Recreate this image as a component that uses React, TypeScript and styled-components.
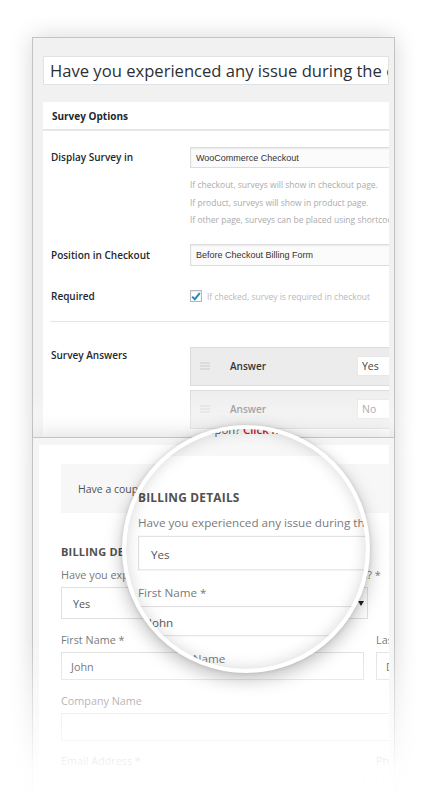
import React from "react";
import styled, { createGlobalStyle } from "styled-components";

const GlobalStyle = createGlobalStyle`
  html, body { margin: 0; padding: 0; background: #fff; }
  body { font-family: "Open Sans", "Liberation Sans", sans-serif; -webkit-font-smoothing: antialiased; }
  * { box-sizing: border-box; }
`;

const Page = styled.div`
  position: relative;
  width: 422px;
  height: 805px;
  overflow: hidden;
  background: #fff;
`;

const Stage = styled.div`
  display: flex;
  flex-direction: column;
  padding: 37px 0 0 32px;
`;

/* ---------- admin (top) panel ---------- */

const AdminPanel = styled.section`
  position: relative;
  width: 363px;
  height: 400px;
  border: 1px solid #c4c4c4;
  border-bottom: none;
  background: #f1f1f1;
  padding: 18px 5px 0 10px;
  overflow: hidden;
  box-shadow: 0 0 22px rgba(0, 0, 0, 0.16);
  &::after {
    content: "";
    position: absolute;
    left: 0;
    right: 0;
    bottom: 0;
    height: 45px;
    background: linear-gradient(rgba(255, 255, 255, 0), rgba(255, 255, 255, 0.5));
    pointer-events: none;
  }
`;

const TitleField = styled.div`
  height: 29px;
  border: 1px solid #e2e2e2;
  background: #fff;
  display: flex;
  align-items: center;
  padding: 0 6px;
  font-size: 16.6px;
  color: #2c3035;
  white-space: nowrap;
  overflow: hidden;
`;

const OptionsCard = styled.div`
  margin-top: 17px;
  background: #fff;
  overflow: hidden;
  height: 400px;
`;

const CardHeader = styled.div`
  height: 29px;
  display: flex;
  align-items: center;
  padding-left: 9px;
  font-size: 10px;
  font-weight: 700;
  color: #23282d;
  border-bottom: 2px solid #e6e6e6;
`;

const CardBody = styled.div`
  padding: 16px 0 0 8px;
  display: flex;
  flex-direction: column;
`;

const FieldRow = styled.div<{ $gap: number }>`
  display: grid;
  grid-template-columns: 139px 1fr;
  margin-top: ${(p) => p.$gap}px;
`;

const RowLabel = styled.div<{ $lh: number }>`
  font-size: 10px;
  font-weight: 600;
  color: #23282d;
  line-height: ${(p) => p.$lh}px;
  white-space: nowrap;
`;

const FieldCol = styled.div`
  display: flex;
  flex-direction: column;
  min-width: 0;
`;

const TextBox = styled.div<{ $h: number }>`
  width: 240px;
  height: ${(p) => p.$h}px;
  border: 1px solid #dcdcdc;
  background: #fbfbfb;
  box-shadow: inset 0 1px 2px rgba(0, 0, 0, 0.07);
  display: flex;
  align-items: center;
  padding-left: 5px;
  font-family: "Liberation Sans", Arial, sans-serif;
  font-size: 9px;
  color: #333;
  white-space: nowrap;
`;

const Hints = styled.div`
  margin-top: 8px;
  font-size: 8.5px;
  line-height: 17.5px;
  color: #ababab;
  white-space: nowrap;
`;

const CheckLine = styled.div`
  display: flex;
  align-items: center;
  height: 13px;
`;

const CheckBox = styled.span`
  width: 12px;
  height: 12px;
  border: 1px solid #b4b9be;
  background: #fff;
  box-shadow: inset 0 1px 2px rgba(0, 0, 0, 0.1);
  display: flex;
  align-items: center;
  justify-content: center;
`;

const CheckText = styled.span`
  margin-left: 5px;
  font-size: 8.5px;
  color: #b9b9b9;
  white-space: nowrap;
`;

const Divider = styled.div`
  margin-top: 18px;
  margin-left: -1px;
  height: 1px;
  background: #e5e5e5;
`;

const AnswerList = styled.div`
  display: flex;
  flex-direction: column;
  gap: 4px;
`;

const AnswerRow = styled.div<{ $faded?: boolean }>`
  width: 260px;
  height: 39px;
  border: 1px solid #dcdcdc;
  background: ${(p) => (p.$faded ? "#efefef" : "#ececec")};
  display: flex;
  align-items: center;
  padding-left: 9px;
`;

const AnswerLabel = styled.span<{ $faded?: boolean }>`
  margin-left: 20px;
  width: 127px;
  font-size: 10px;
  font-weight: 600;
  color: ${(p) => (p.$faded ? "#8d8d8d" : "#333")};
`;

const AnswerInput = styled.span<{ $faded?: boolean }>`
  width: 70px;
  height: 20px;
  background: #fff;
  border: 1px solid #e8e8e8;
  display: flex;
  align-items: center;
  padding-left: 4px;
  font-size: 10.5px;
  color: ${(p) => (p.$faded ? "#999" : "#444")};
`;

const Handle = ({ faded }: { faded?: boolean }) => (
  <svg width="10" height="8" viewBox="0 0 10 8">
    {[0.5, 3.5, 6.5].map((y) => (
      <rect key={y} x="0" y={y} width="10" height="1" fill={faded ? "#d6d6d6" : "#cacaca"} />
    ))}
  </svg>
);

/* ---------- checkout (bottom) panel ---------- */

const CheckoutPanel = styled.section`
  position: relative;
  z-index: 1;
  width: 363px;
  height: 380px;
  border: 1px solid #c4c4c4;
  border-bottom: none;
  background: #f5f5f5;
  padding: 7px 5px 0 6px;
  box-shadow: 0 0 22px rgba(0, 0, 0, 0.16);
`;

const CheckoutInner = styled.div`
  height: 100%;
  background: #fff;
  padding: 19px 0 0 22px;
  overflow: hidden;
`;

const Form = styled.div`
  width: 618px;
  display: flex;
  flex-direction: column;
  font-family: "Open Sans", "Liberation Sans", sans-serif;
`;

const CouponBox = styled.div`
  height: 49px;
  background: #f7f7f7;
  display: flex;
  align-items: center;
  padding-left: 17px;
  font-size: 10.5px;
  color: #515151;
  white-space: nowrap;
`;

const CouponLink = styled.span`
  color: #c4161c;
  font-weight: 600;
`;

const BillingTitle = styled.div`
  margin-top: 32px;
  font-size: 11px;
  line-height: 14px;
  font-weight: 700;
  color: #515151;
  letter-spacing: 0.2px;
  text-transform: uppercase;
`;

const FormLabel = styled.div<{ $gap: number }>`
  margin-top: ${(p) => p.$gap}px;
  font-size: 10.8px;
  line-height: 14px;
  color: #7a7a7a;
  white-space: nowrap;
`;

const SelectBox = styled.div`
  margin-top: 5px;
  width: 307px;
  height: 32px;
  border: 1px solid #e0e0e0;
  display: flex;
  align-items: center;
  justify-content: space-between;
  padding: 0 3px 0 11px;
  font-size: 10.8px;
  color: #555;
`;

const Caret = styled.span`
  width: 0;
  height: 0;
  border-left: 3px solid transparent;
  border-right: 3px solid transparent;
  border-top: 5px solid #222;
`;

const TwoCols = styled.div`
  display: grid;
  grid-template-columns: 303px 303px;
  column-gap: 12px;
`;

const FieldGroup = styled.div`
  display: flex;
  flex-direction: column;
`;

const InputBox = styled.div<{ $w?: number }>`
  margin-top: 5px;
  width: ${(p) => (p.$w ? `${p.$w}px` : "100%")};
  height: 28px;
  border: 1px solid #e0e0e0;
  display: flex;
  align-items: center;
  padding-left: 9px;
  font-size: 10.8px;
  color: #555;
`;

const CheckoutForm = () => (
  <Form>
    <CouponBox>
      Have a coupon?&nbsp;<CouponLink>Click here to enter your code</CouponLink>
    </CouponBox>
    <BillingTitle>Billing Details</BillingTitle>
    <FormLabel $gap={9}>Have you experienced any issue during the checkout process? *</FormLabel>
    <SelectBox>
      <span>Yes</span>
      <Caret />
    </SelectBox>
    <TwoCols>
      <FieldGroup>
        <FormLabel $gap={14}>First Name *</FormLabel>
        <InputBox>John</InputBox>
      </FieldGroup>
      <FieldGroup>
        <FormLabel $gap={14}>Last Name *</FormLabel>
        <InputBox>Doe</InputBox>
      </FieldGroup>
    </TwoCols>
    <FormLabel $gap={14}>Company Name</FormLabel>
    <InputBox $w={618} />
    <TwoCols>
      <FieldGroup>
        <FormLabel $gap={13}>Email Address *</FormLabel>
        <InputBox />
      </FieldGroup>
      <FieldGroup>
        <FormLabel $gap={13}>Phone *</FormLabel>
        <InputBox />
      </FieldGroup>
    </TwoCols>
  </Form>
);

/* ---------- overlays ---------- */

const Fade = styled.div`
  position: absolute;
  left: 0;
  right: 0;
  top: 640px;
  bottom: 0;
  background: linear-gradient(rgba(255, 255, 255, 0), rgba(255, 255, 255, 0.93) 78%, #fff);
  z-index: 2;
  pointer-events: none;
`;

const Lens = styled.div`
  position: absolute;
  left: 122px;
  top: 425px;
  width: 248px;
  height: 248px;
  border-radius: 50%;
  border: 4px solid #fff;
  background: #fff;
  overflow: hidden;
  z-index: 3;
  box-shadow: 0 6px 18px rgba(0, 0, 0, 0.26), 0 0 4px rgba(0, 0, 0, 0.12);
  &::after {
    content: "";
    position: absolute;
    inset: 0;
    border-radius: 50%;
    box-shadow: inset 0 0 16px rgba(0, 0, 0, 0.16);
    pointer-events: none;
  }
`;

const LensView = styled.div`
  transform: translate(12px, -26px) scale(1.08);
  transform-origin: 0 0;
`;

const Check = () => (
  <svg width="10" height="9" viewBox="0 0 10 9">
    <path d="M1.2 4.6 L3.8 7.2 L8.8 1.2" fill="none" stroke="#1e8cbe" strokeWidth="2" />
  </svg>
);

export default function App() {
  return (
    <Page>
      <GlobalStyle />
      <Stage>
        <AdminPanel>
          <TitleField>Have you experienced any issue during the checkout process?</TitleField>
          <OptionsCard>
            <CardHeader>Survey Options</CardHeader>
            <CardBody>
              <FieldRow $gap={0}>
                <RowLabel $lh={21}>Display Survey in</RowLabel>
                <FieldCol>
                  <TextBox $h={21}>WooCommerce Checkout</TextBox>
                  <Hints>
                    <div>If checkout, surveys will show in checkout page.</div>
                    <div>If product, surveys will show in product page.</div>
                    <div>If other page, surveys can be placed using shortcode.</div>
                  </Hints>
                </FieldCol>
              </FieldRow>
              <FieldRow $gap={15}>
                <RowLabel $lh={22}>Position in Checkout</RowLabel>
                <FieldCol>
                  <TextBox $h={22}>Before Checkout Billing Form</TextBox>
                </FieldCol>
              </FieldRow>
              <FieldRow $gap={24}>
                <RowLabel $lh={13}>Required</RowLabel>
                <CheckLine>
                  <CheckBox>
                    <Check />
                  </CheckBox>
                  <CheckText>If checked, survey is required in checkout</CheckText>
                </CheckLine>
              </FieldRow>
              <Divider />
              <FieldRow $gap={25}>
                <RowLabel $lh={16}>Survey Answers</RowLabel>
                <AnswerList>
                  <AnswerRow>
                    <Handle />
                    <AnswerLabel>Answer</AnswerLabel>
                    <AnswerInput>Yes</AnswerInput>
                  </AnswerRow>
                  <AnswerRow $faded>
                    <Handle faded />
                    <AnswerLabel $faded>Answer</AnswerLabel>
                    <AnswerInput $faded>No</AnswerInput>
                  </AnswerRow>
                </AnswerList>
              </FieldRow>
            </CardBody>
          </OptionsCard>
        </AdminPanel>
        <CheckoutPanel>
          <CheckoutInner>
            <CheckoutForm />
          </CheckoutInner>
        </CheckoutPanel>
      </Stage>
      <Fade />
      <Lens>
        <LensView>
          <CheckoutForm />
        </LensView>
      </Lens>
    </Page>
  );
}
